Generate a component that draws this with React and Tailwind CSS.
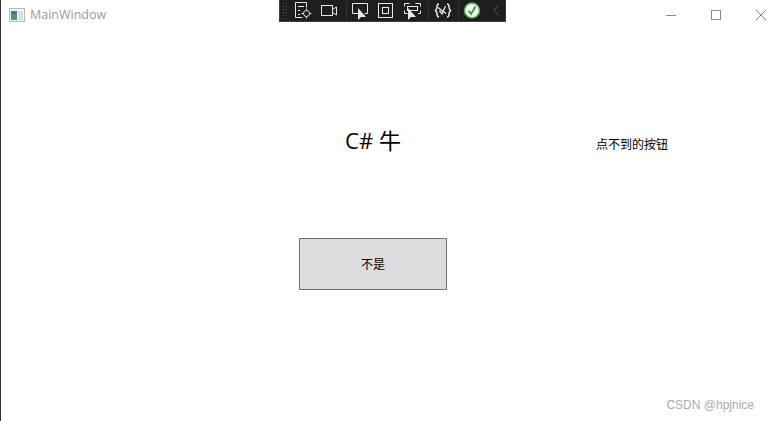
import React from "react";

const Toolbar = () => (
  <div className="absolute left-[278px] top-0 w-[227px] h-[22px] bg-[#1e1e20] border border-[#3c3c3c] border-t-0">
    <svg width="225" height="21" viewBox="0 0 225 21" fill="none" stroke="#e8e8e8" strokeWidth="1">
      {/* grip */}
      <g stroke="none" fill="#55555a">
        <rect x="3" y="3" width="1" height="1" /><rect x="6" y="3" width="1" height="1" />
        <rect x="3" y="6" width="1" height="1" /><rect x="6" y="6" width="1" height="1" />
        <rect x="3" y="9" width="1" height="1" /><rect x="6" y="9" width="1" height="1" />
        <rect x="3" y="12" width="1" height="1" /><rect x="6" y="12" width="1" height="1" />
        <rect x="3" y="15" width="1" height="1" /><rect x="6" y="15" width="1" height="1" />
        <rect x="3" y="18" width="1" height="1" /><rect x="6" y="18" width="1" height="1" />
      </g>
      {/* live tree */}
      <path d="M22.500 17.500h-7v-15h11v5" />
      <path d="M18 6.500h6M18 10.500h2M18 14.500h2" />
      <circle cx="26.500" cy="13.500" r="3" />
      <path d="M26.500 8.500v2M26.500 16.500v2M21.500 13.500h2M29.500 13.500h2" />
      {/* camera */}
      <rect x="41.500" y="5.500" width="11" height="10" />
      <path d="M52.500 9.500l4-2.500v8l-4-2.500" />
      <path d="M66.500 2v18" stroke="#343438" />
      {/* select element */}
      <path d="M78.500 13.500h-6v-10h15v10h-3" />
      <path d="M78 8l0 12 3-3 5 0z" fill="#e8e8e8" stroke="none" />
      {/* layout adorner */}
      <rect x="98.500" y="3.500" width="14" height="14" />
      <rect x="102.500" y="7.500" width="6" height="6" />
      {/* track element */}
      <path d="M124.500 6.500v-3h5M135.500 3.500h5v3M124.500 10.500v3h3M138 13.500h2.500v-3" />
      <rect x="127.500" y="6.500" width="10" height="4" />
      <path d="M128 8l0 12 3-3 5 0z" fill="#e8e8e8" stroke="none" />
      <path d="M148.500 2v18" stroke="#343438" />
      {/* binding failures */}
      <path d="M159 4c-2 0-2 1.500-2 3s-.5 2.500-1.500 3.500c1 1 1.500 2 1.500 3.500s0 3 2 3M167 4c2 0 2 1.500 2 3s.5 2.500 1.500 3.500c-1 1-1.500 2-1.500 3.500s0 3-2 3" strokeWidth="1.500" />
      <path d="M159.500 10.500l2.500 3.500 3.500-8M158 7.500l8 6" strokeWidth="1.300" />
      <path d="M178.500 2v18" stroke="#343438" />
      {/* ok status */}
      <circle cx="192" cy="10.500" r="7.500" fill="#f4f8f2" stroke="#4fae4a" strokeWidth="1.500" />
      <path d="M188.500 10.500l2.500 3.500 4.500-7.500" stroke="#3d9a3a" strokeWidth="1.800" />
      {/* collapse */}
      <path d="M218.500 5.500l-4.500 5 4.500 5" stroke="#56565a" />
    </svg>
  </div>
);

const TitleBar = () => (
  <div className="flex items-center h-[30px] pl-[8px] pr-[3px] bg-white">
    <svg width="16" height="14" viewBox="0 0 16 14" className="mr-[5px] shrink-0">
      <rect x="0.500" y="0.500" width="15" height="13" fill="#f2f3f5" stroke="#b4b6bc" />
      <rect x="2" y="3" width="6" height="9" fill="#4f8f8c" />
      <rect x="2" y="3" width="6" height="3" fill="#51709c" />
      <rect x="9" y="3" width="5" height="9" fill="#dde1e3" />
    </svg>
    <span className="text-[12.500px] text-[#959ba6] font-['Open_Sans','Noto_Sans',sans-serif]">MainWindow</span>
    <div className="ml-auto flex items-center gap-[35px]">
      <svg width="10" height="10" viewBox="0 0 10 10" stroke="#8c8c8c" fill="none"><path d="M0 5.500h10" /></svg>
      <svg width="10" height="10" viewBox="0 0 10 10" stroke="#8c8c8c" fill="none"><rect x="0.500" y="0.500" width="9" height="9" /></svg>
      <svg width="10" height="10" viewBox="0 0 10 10" stroke="#8c8c8c" fill="none"><path d="M0 0l10 10M10 0l-10 10" /></svg>
    </div>
  </div>
);

export default function App() {
  const cjk = "font-['Liberation_Sans','Noto_Sans_CJK_SC',sans-serif]";
  return (
    <div className={`relative w-[769px] h-[421px] overflow-hidden bg-white border-l border-[#333333] text-black ${cjk}`}>
      <TitleBar />
      <Toolbar />
      <div className="grid grid-cols-[298px_148px_1fr] pt-[95px]">
        <div />
        <div className="h-[30px] flex items-center justify-center text-[22px] leading-[30px] font-['Open_Sans','Noto_Sans_CJK_SC',sans-serif]">C# 牛</div>
        <div className="h-[30px] flex items-center pl-[149px] pt-[10px] text-[12px]">点不到的按钮</div>
        <div />
        <button className="mt-[83px] h-[52px] flex items-center justify-center pt-[2px] bg-[#dddddd] border border-[#707070] text-[12px]">不是</button>
      </div>
      <div className="absolute right-[15px] bottom-[9px] text-[12px] leading-[14px] text-[#ababab]">CSDN @hpjnice</div>
    </div>
  );
}
